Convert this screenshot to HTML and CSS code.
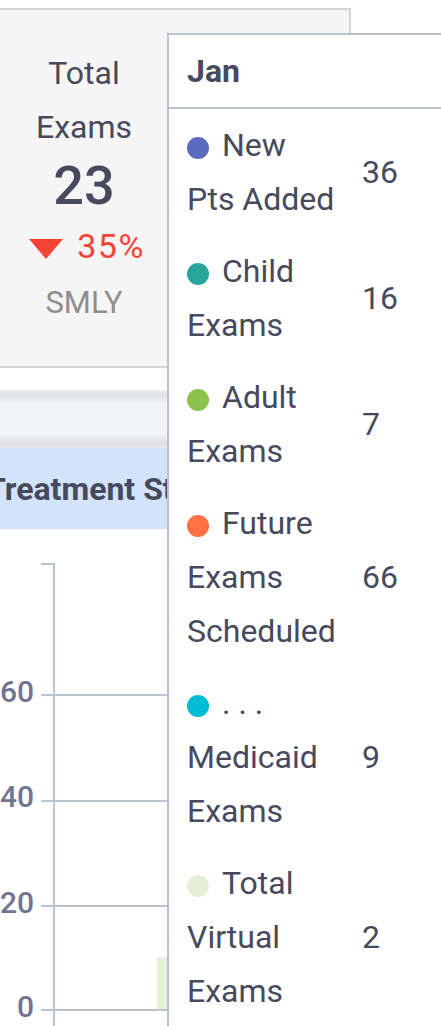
FILE: index.html
```html
<!DOCTYPE html>
<html lang="en">
<head>
<meta charset="utf-8">
<title>Dashboard</title>
<link rel="stylesheet" href="styles.css">
</head>
<body>
<div class="page">
  <section class="kpi-card">
    <div class="kpi">
      <div class="kpi-title">Total Exams</div>
      <div class="kpi-value">23</div>
      <div class="kpi-change"><span class="tri"></span>35%</div>
      <div class="kpi-period">SMLY</div>
    </div>
  </section>

  <div class="tabstrip"></div>

  <div class="section-bar">
    <h2 class="section-title">Treatment Status</h2>
  </div>

  <div class="chart">
    <svg width="441" height="497" viewBox="0 0 441 497">
      <rect x="157" y="428" width="20" height="53" fill="#e3efd9"/>
      <g stroke="#b9c2cf" stroke-width="2" fill="none">
        <path d="M41 35 H55"/>
        <path d="M54 34 V497"/>
        <path d="M41 166 H441"/>
        <path d="M41 272 H441"/>
        <path d="M41 377 H441"/>
        <path d="M41 481 H441"/>
      </g>
      <g class="axis-label" text-anchor="end">
        <text x="34" y="173">60</text>
        <text x="34" y="278">40</text>
        <text x="34" y="384">20</text>
        <text x="34" y="488">0</text>
      </g>
    </svg>
  </div>

  <div class="tooltip">
    <div class="tooltip-title">Jan</div>
    <div class="tooltip-row">
      <div class="tooltip-label"><span class="dot dot-indigo"></span>New<br>Pts Added</div>
      <div class="tooltip-value">36</div>
    </div>
    <div class="tooltip-row">
      <div class="tooltip-label"><span class="dot dot-teal"></span>Child<br>Exams</div>
      <div class="tooltip-value">16</div>
    </div>
    <div class="tooltip-row">
      <div class="tooltip-label"><span class="dot dot-green"></span>Adult<br>Exams</div>
      <div class="tooltip-value">7</div>
    </div>
    <div class="tooltip-row">
      <div class="tooltip-label"><span class="dot dot-orange"></span>Future<br>Exams<br>Scheduled</div>
      <div class="tooltip-value">66</div>
    </div>
    <div class="tooltip-row">
      <div class="tooltip-label"><span class="dot dot-cyan"></span>. . .<br>Medicaid<br>Exams</div>
      <div class="tooltip-value">9</div>
    </div>
    <div class="tooltip-row">
      <div class="tooltip-label"><span class="dot dot-pale"></span>Total<br>Virtual<br>Exams</div>
      <div class="tooltip-value">2</div>
    </div>
  </div>
</div>
</body>
</html>
```

FILE: styles.css
```css
* { box-sizing: border-box; }
html, body { margin: 0; padding: 0; }
body {
  font-family: Roboto, "Liberation Sans", Arial, sans-serif;
  color: #464a5c;
  background: #ffffff;
}
.page {
  position: relative;
  width: 441px;
  height: 1026px;
  overflow: hidden;
}

/* KPI card */
.kpi-card {
  margin-top: 8px;
  width: 351px;
  height: 360px;
  background: #f5f5f5;
  border: 2px solid #d6d6d6;
  border-left: none;
  display: flex;
}
.kpi {
  width: 168px;
  padding-top: 36px;
  text-align: center;
}
.kpi-title {
  font-size: 32px;
  line-height: 54px;
}
.kpi-value {
  font-size: 54px;
  font-weight: 500;
  line-height: 64px;
}
.kpi-change {
  padding-left: 6px;
  font-size: 34px;
  letter-spacing: 1.5px;
  line-height: 56px;
  color: #f44336;
}
.tri {
  display: inline-block;
  width: 0;
  height: 0;
  border-left: 17px solid transparent;
  border-right: 17px solid transparent;
  border-top: 20px solid #f44336;
  vertical-align: middle;
  margin-right: 14px;
}
.kpi-period {
  font-size: 31px;
  line-height: 57px;
  color: #8e8e8e;
}

/* strip under card */
.tabstrip {
  margin-top: 22px;
  height: 58px;
  background: linear-gradient(to bottom,
    #ebebef 0, #ebebef 2px,
    #dedfe3 3px, #f3f4f8 15px,
    #f3f4f8 calc(100% - 14px), #dcdce0 calc(100% - 3px),
    #e8e8ec calc(100% - 2px), #e8e8ec 100%);
}

.section-bar {
  height: 81px;
  background: #d3e3fa;
  display: flex;
  align-items: center;
  overflow: hidden;
}
.section-title {
  margin: 0 0 0 -14px;
  font-size: 32px;
  font-weight: 700;
  line-height: 1;
  white-space: nowrap;
}

.chart svg { display: block; }
.axis-label text {
  font-family: Roboto, "Liberation Sans", Arial, sans-serif;
  font-size: 30px;
  font-weight: 500;
  fill: #6f7592;
}

/* tooltip */
.tooltip {
  position: absolute;
  left: 167px;
  top: 33px;
  width: 300px;
  background: #ffffff;
  border: 2px solid #b9c2cf;
  font-size: 32px;
}
.tooltip-title {
  padding: 9px 18px;
  line-height: 54px;
  font-weight: 700;
  font-size: 32px;
  border-bottom: 2px solid #b9c2cf;
}
.tooltip-row {
  display: grid;
  grid-template-columns: 175px auto;
  align-items: center;
  padding: 9px 0 9px 18px;
  line-height: 54px;
}
.dot {
  display: inline-block;
  width: 22px;
  height: 22px;
  border-radius: 50%;
  vertical-align: middle;
  margin-right: 13px;
}
.dot-indigo { background: #5c6bc0; }
.dot-teal { background: #26a69a; }
.dot-green { background: #8bc34a; }
.dot-orange { background: #ff7043; }
.dot-cyan { background: #00bcd4; }
.dot-pale { background: #e3efd9; }
```
